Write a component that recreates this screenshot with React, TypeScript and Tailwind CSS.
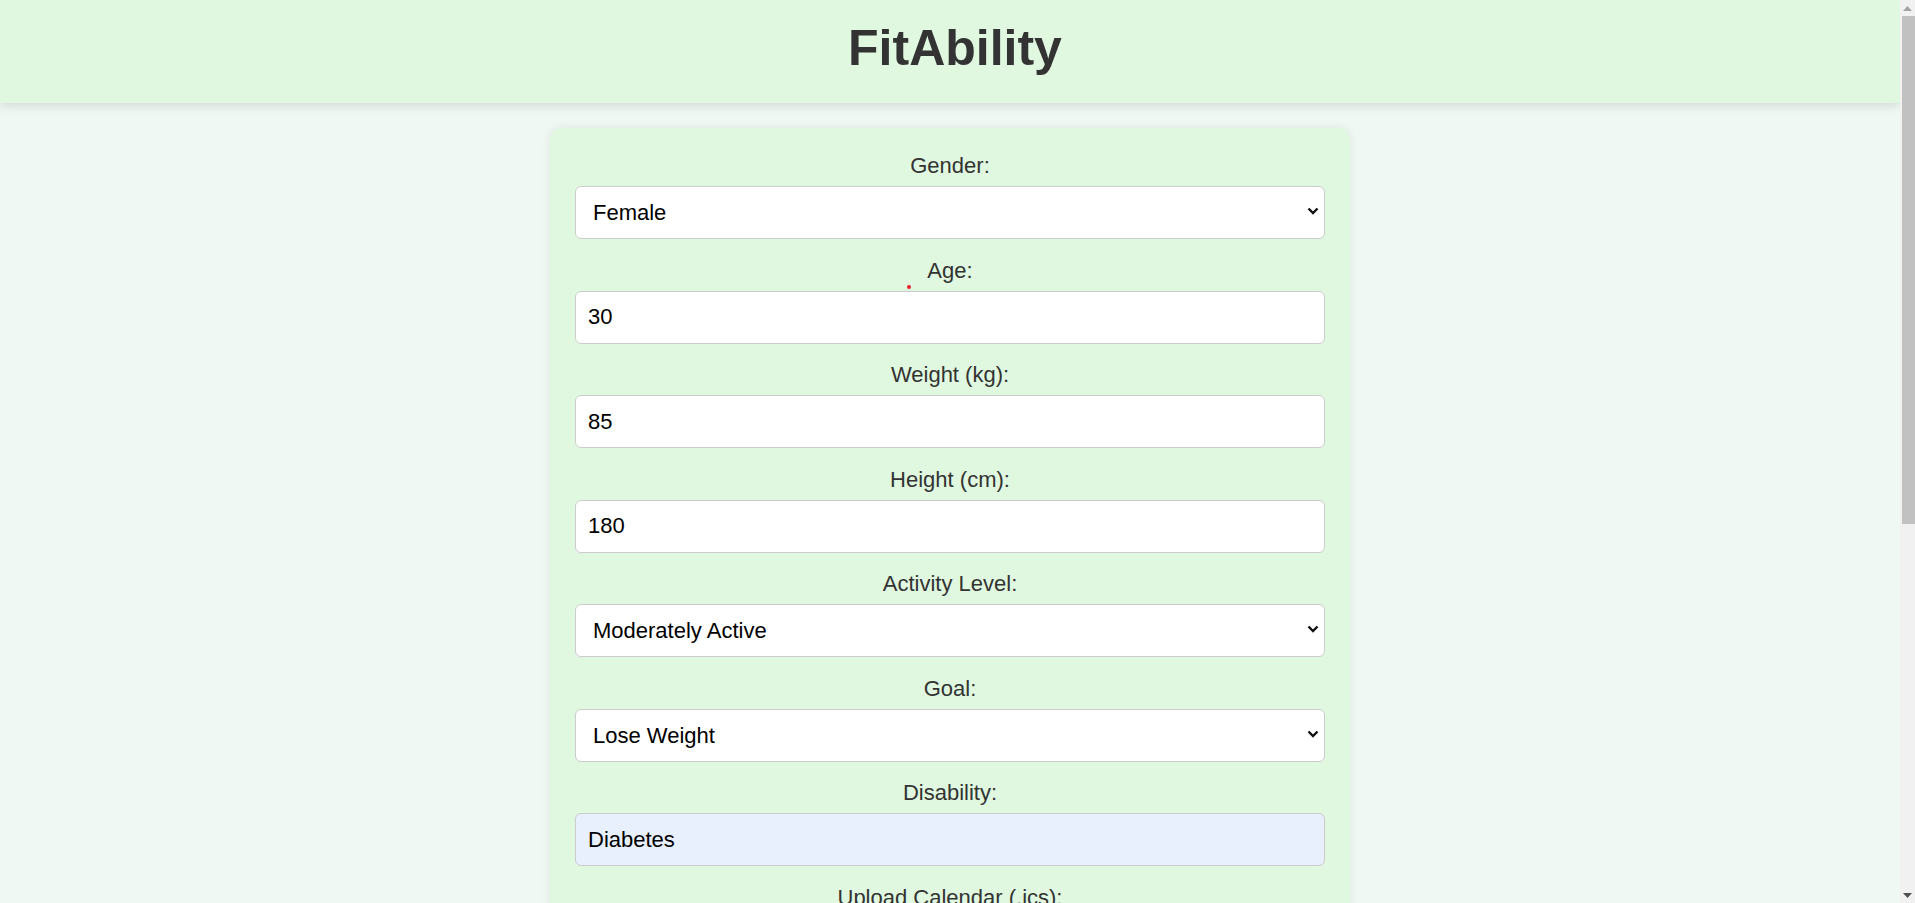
import { useState } from "react";

// =========================
// Field wrappers
// =========================
function Field({ label, children }: any) {
  return (
    <div className="flex flex-col mb-[18.5px]">
      <label className="block text-center text-[22px] leading-[25px] text-[#333] mb-[8px]">
        {label}
      </label>
      {children}
    </div>
  );
}

function TextInput({ value, autofill }: any) {
  const [v, setV] = useState(value);
  return (
    <input
      type="text"
      value={v}
      onChange={(e) => setV(e.target.value)}
      className={`h-[53px] w-full rounded-[6px] border border-[#cccccc] pl-[12px] pr-[12px] text-[22px] text-black outline-none ${
        autofill ? "bg-[#e8f0fe]" : "bg-white"
      }`}
    />
  );
}

function Select({ value, options }: any) {
  const [v, setV] = useState(value);
  return (
    <div className="relative">
      <select
        value={v}
        onChange={(e) => setV(e.target.value)}
        className="h-[53px] w-full appearance-none rounded-[6px] border border-[#cccccc] bg-white pl-[17px] pr-[30px] text-[22px] text-black outline-none"
      >
        {options.map((o: string) => (
          <option key={o} value={o}>
            {o}
          </option>
        ))}
      </select>
      <svg
        className="pointer-events-none absolute right-[6px] top-[21px]"
        width="12"
        height="8"
        viewBox="0 0 12 8"
        fill="none"
      >
        <path d="M1.5 1.5 L6 6 L10.5 1.5" stroke="#111" strokeWidth="2.4" />
      </svg>
    </div>
  );
}

// =========================
// Scrollbar (window chrome)
// =========================
function Scrollbar() {
  return (
    <div className="flex h-full w-[15px] shrink-0 flex-col bg-[#f1f1f1]">
      <div className="flex h-[16px] items-center justify-center">
        <svg width="9" height="5" viewBox="0 0 9 5">
          <path d="M0 5 L4.5 0 L9 5 Z" fill="#a3a3a3" />
        </svg>
      </div>
      <div className="ml-[2px] h-[508px] bg-[#c1c1c1]" />
      <div className="flex-1" />
      <div className="flex h-[16px] items-center justify-center">
        <svg width="9" height="5" viewBox="0 0 9 5">
          <path d="M0 0 L9 0 L4.5 5 Z" fill="#505050" />
        </svg>
      </div>
    </div>
  );
}

// =========================
// Main Page
// =========================
export default function App() {
  return (
    <div className="flex h-screen overflow-hidden bg-[#f0f8f4] font-['Liberation_Sans',Arial,sans-serif]">
      <div className="flex-1 overflow-y-auto">
        {/* Header */}
        <header className="relative z-10 h-[103px] bg-[#e0f8e0] shadow-[0_3px_10px_rgba(0,0,0,0.12)] flex justify-center pt-[20px]">
          <h1 className="pl-[10px] text-[50px] leading-[57px] font-bold text-[#333]">
            FitAbility
          </h1>
        </header>

        {/* Form */}
        <main className="flex justify-center pt-[25px] pb-[440px]">
          <div className="relative w-[800px] rounded-[12px] bg-[#e0f8e0] p-[25px] shadow-[0_0_10px_rgba(0,0,0,0.08)]">
            <Field label="Gender:">
              <Select value="Female" options={["Male", "Female"]} />
            </Field>

            <Field label="Age:">
              <TextInput value="30" />
            </Field>

            <Field label="Weight (kg):">
              <TextInput value="85" />
            </Field>

            <Field label="Height (cm):">
              <TextInput value="180" />
            </Field>

            <Field label="Activity Level:">
              <Select
                value="Moderately Active"
                options={[
                  "Sedentary",
                  "Lightly Active",
                  "Moderately Active",
                  "Very Active",
                ]}
              />
            </Field>

            <Field label="Goal:">
              <Select
                value="Lose Weight"
                options={["Lose Weight", "Maintain Weight", "Gain Muscle"]}
              />
            </Field>

            <Field label="Disability:">
              <TextInput value="Diabetes" autofill />
            </Field>

            <Field label="Upload Calendar (.ics):">
              <input
                type="file"
                accept=".ics"
                className="h-[53px] w-full rounded-[6px] border border-[#cccccc] bg-white px-[12px] py-[12px] text-[18px]"
              />
            </Field>

            <button className="mt-[6px] h-[56px] w-full rounded-[6px] bg-[#4caf50] text-[22px] text-white">
              Generate Plan
            </button>

            {/* stray red dot */}
            <span className="absolute left-[357px] top-[157px] h-[4px] w-[4px] rounded-full bg-[#e8202a]" />
          </div>
        </main>
      </div>
      <Scrollbar />
    </div>
  );
}
